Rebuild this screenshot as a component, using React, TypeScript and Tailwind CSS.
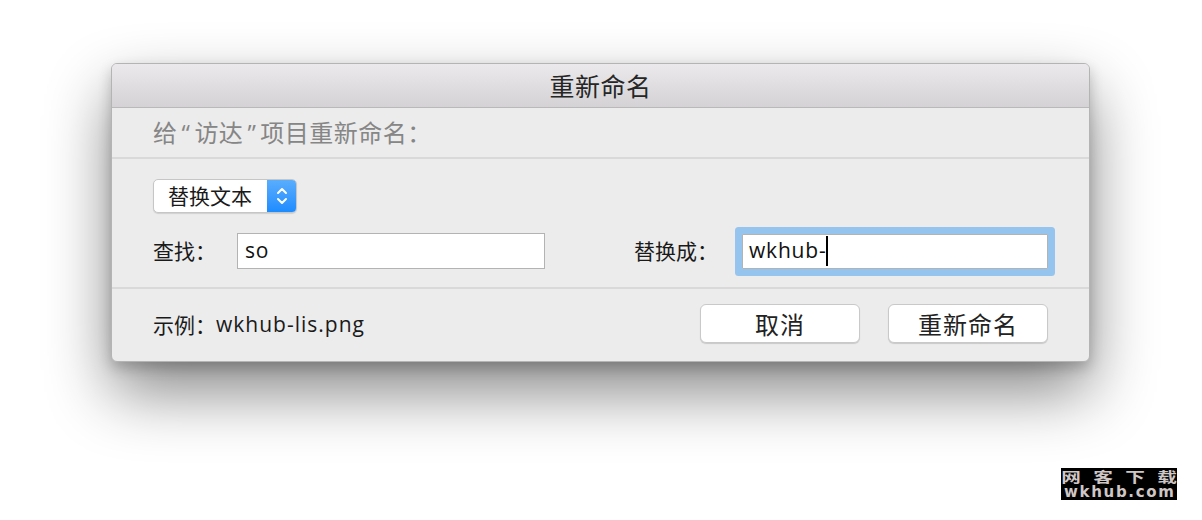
import React from "react";

const CJK = '"Noto Sans CJK SC", "Noto Sans", sans-serif';
const LATIN = '"Open Sans", "Noto Sans CJK SC", sans-serif';

function Chevrons() {
  return (
    <svg width="14" height="22" viewBox="0 0 14 22" fill="none">
      <path d="M3 8 L7 4 L11 8" stroke="white" strokeWidth="2" strokeLinecap="round" strokeLinejoin="round" />
      <path d="M3 14 L7 18 L11 14" stroke="white" strokeWidth="2" strokeLinecap="round" strokeLinejoin="round" />
    </svg>
  );
}

function Q({ c }: { c: string }) {
  return (
    <span className="mx-[4px]" style={{ fontFamily: LATIN }}>
      {c}
    </span>
  );
}

export default function App() {
  return (
    <div className="relative w-[1202px] h-[520px] bg-white overflow-hidden" style={{ fontFamily: CJK }}>
      <div className="pt-[63px] pl-[111px]">
        <div className="w-[979px] rounded-[6px] border border-[#b4b4b4] bg-[#ececec] shadow-[0_30px_64px_rgba(0,0,0,0.47),0_6px_14px_rgba(0,0,0,0.2)] overflow-hidden">
          {/* title bar */}
          <div className="h-[44px] flex items-center justify-center bg-gradient-to-b from-[#ebe9eb] to-[#d4d2d4] border-b border-[#b9b9b9]">
            <span className="text-[25px] leading-none text-[#262626] tracking-[0.5px]">重新命名</span>
          </div>
          {/* header */}
          <div className="h-[51px] flex items-center pl-[41px] border-b-2 border-[#d9d9d9]">
            <span className="text-[24px] leading-none text-[#868686] tracking-[0.5px] whitespace-nowrap">
              给<Q c="“" />访达<Q c="”" />项目重新命名：
            </span>
          </div>
          {/* main */}
          <div className="pt-[20px] pb-[18px] px-[41px] border-b-2 border-[#d9d9d9]">
            <div className="flex">
              <div className="flex h-[34px] w-[144px] rounded-[5px] border border-[#c6c6c6] bg-white shadow-[0_1px_1px_rgba(0,0,0,0.12)] overflow-hidden">
                <div className="flex-1 flex items-center pl-[14px] text-[21px] text-[#1a1a1a]">替换文本</div>
                <div className="w-[29px] flex items-center justify-center bg-gradient-to-b from-[#59adfc] to-[#1b8cff]">
                  <Chevrons />
                </div>
              </div>
            </div>
            <div className="mt-[20px] flex items-center justify-between">
              <div className="flex items-center">
                <span className="w-[84px] text-[21px] text-[#1a1a1a]">查找：</span>
                <div className="w-[308px] h-[36px] border border-[#b3b3b3] bg-white flex items-center pl-[7px]">
                  <span className="text-[21px] text-[#111] tracking-[0.8px]" style={{ fontFamily: LATIN }}>so</span>
                </div>
              </div>
              <div className="flex items-center">
                <span className="w-[108px] text-[21px] text-[#1a1a1a]">替换成：</span>
                <div className="w-[306px] h-[35px] border border-[#b3b3b3] bg-white flex items-center pl-[6px] rounded-[1px] shadow-[0_0_0_7px_#95c4ef]">
                  <span className="text-[21px] text-[#111] tracking-[0.8px]" style={{ fontFamily: LATIN }}>wkhub-</span>
                  <span className="w-[2px] h-[30px] bg-black" />
                </div>
              </div>
            </div>
          </div>
          {/* footer */}
          <div className="h-[72px] flex items-center justify-between pl-[41px] pr-[41px]">
            <div className="flex items-center text-[#1a1a1a] whitespace-nowrap">
              <span className="text-[21px]">示例：</span>
              <span className="text-[21px] tracking-[1px]" style={{ fontFamily: LATIN }}>wkhub-lis.png</span>
            </div>
            <div className="flex gap-[28px] -mt-[3px]">
              <button className="w-[160px] h-[39px] rounded-[6px] bg-white border border-[#c9c9c9] shadow-[0_1px_1px_rgba(0,0,0,0.15)] text-[24px] text-[#222] leading-none tracking-[1px]">取消</button>
              <button className="w-[160px] h-[39px] rounded-[6px] bg-white border border-[#c9c9c9] shadow-[0_1px_1px_rgba(0,0,0,0.15)] text-[24px] text-[#222] leading-none tracking-[1px]">重新命名</button>
            </div>
          </div>
        </div>
      </div>
      {/* watermark */}
      <div className="absolute left-[1061px] top-[468px] w-[116px] h-[32px] bg-black flex flex-col justify-center px-[3px] text-[#cfc6c6] font-bold whitespace-nowrap">
        <div className="h-[16px] flex items-center justify-between text-[14px] leading-[16px]">
          <span className="inline-block scale-x-[1.4]">网</span>
          <span className="inline-block scale-x-[1.4]">客</span>
          <span className="inline-block scale-x-[1.4]">下</span>
          <span className="inline-block scale-x-[1.4]">载</span>
        </div>
        <div className="h-[16px] flex items-center justify-between text-[15px] leading-[16px]" style={{ fontFamily: '"DejaVu Sans", sans-serif' }}>
          <span>w</span>
          <span>k</span>
          <span>h</span>
          <span>u</span>
          <span>b</span>
          <span>.</span>
          <span>c</span>
          <span>o</span>
          <span>m</span>
        </div>
      </div>
    </div>
  );
}
